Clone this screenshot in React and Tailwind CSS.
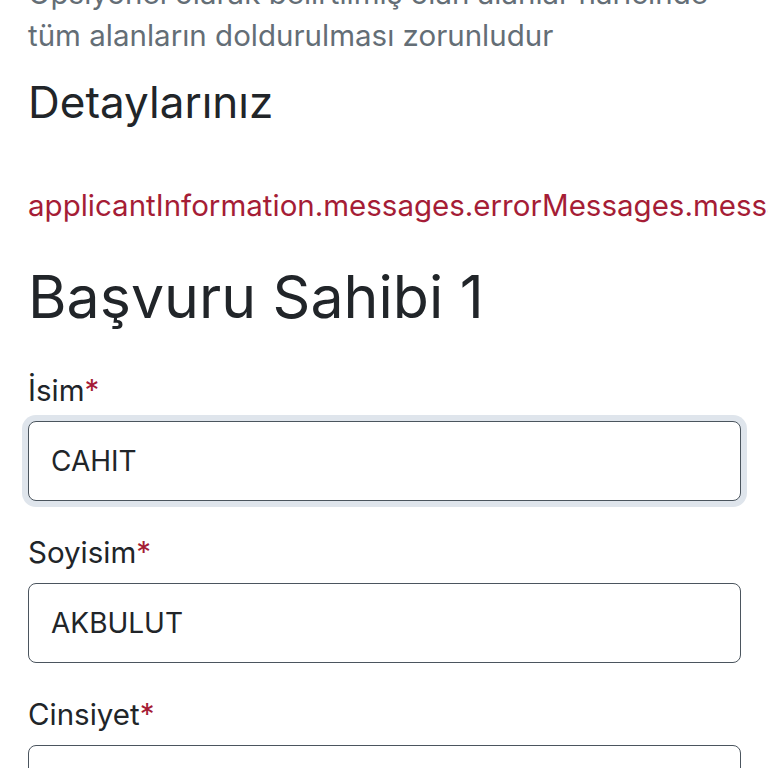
export default function App() {
  const fields = [
    ["İsim", "CAHIT", true],
    ["Soyisim", "AKBULUT", false],
    ["Cinsiyet", "", false],
  ];
  return (
    <div className="w-[768px] h-[768px] overflow-hidden bg-white font-['Inter','Noto_Sans',sans-serif]">
      <div className="pl-[28px] pr-[27px] -mt-[28px]">
        <p className="text-[29.5px] leading-[42px] text-[#646e76] whitespace-nowrap">
          Opsiyonel olarak belirtilmiş olan alanlar haricinde
          <br />
          tüm alanların doldurulması zorunludur
        </p>
        <h2 className="mt-[20px] text-[44px] leading-[52px] text-[#212529]">Detaylarınız</h2>
        <p className="mt-[57px] text-[29.5px] leading-[40px] text-[#a51d36] whitespace-nowrap">
          applicantInformation.messages.errorMessages.messageRequired
        </p>
        <h1 className="mt-[40px] text-[59px] leading-[64px] text-[#212529]">Başvuru Sahibi 1</h1>
        <div className="mt-[41px] flex flex-col gap-[31px]">
          {fields.map(([label, value, focus]) => (
            <div key={label} className="flex flex-col gap-[11px]">
              <label className="block text-[29.5px] leading-[40px] text-[#212529]">
                {label}
                <span className="text-[#a51d36]">*</span>
              </label>
              <div
                className={
                  "h-[80px] shrink-0 rounded-[8px] border-[1.5px] border-[#4b555e] bg-white flex items-center px-[22px] text-[28px] text-[#212529] " +
                  (focus ? "ring-[6px] ring-[#dfe5ec]" : "")
                }
              >
                {value}
              </div>
            </div>
          ))}
        </div>
      </div>
    </div>
  );
}
